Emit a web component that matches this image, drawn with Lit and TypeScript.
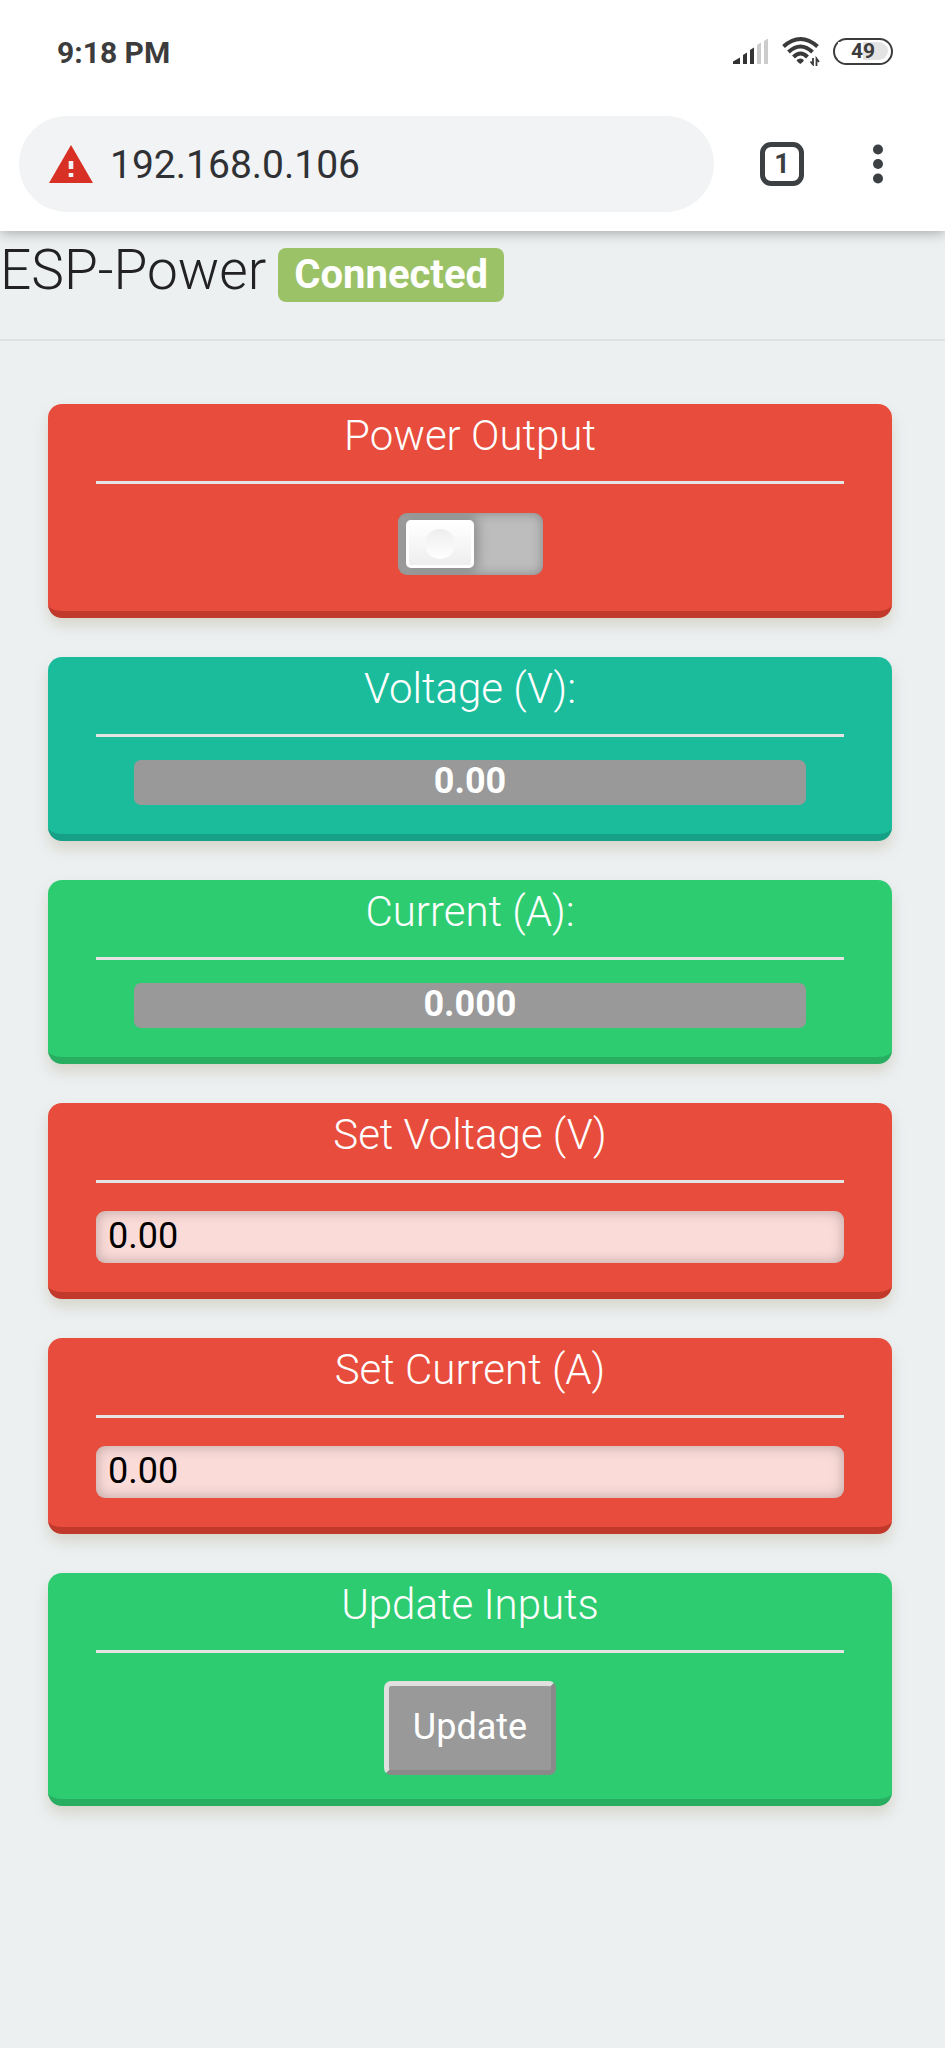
import { LitElement, html, css, svg, TemplateResult } from "lit";
import { customElement, state } from "lit/decorators.js";

@customElement("app-root")
export class AppRoot extends LitElement {
  static styles = css`
    :host {
      display: block;
      min-height: 100vh;
      background: #ecf0f1;
      color: #222;
      font-family: Roboto, sans-serif;
    }
    *,
    *::before,
    *::after {
      box-sizing: border-box;
    }
    h1,
    h2 {
      margin: 0;
      font-weight: 300;
    }
    .phone-chrome {
      background: #fff;
      color: #3c4043;
      box-shadow: 0 2px 12px rgba(0, 0, 0, 0.3);
    }
    .status {
      display: flex;
      align-items: center;
      justify-content: space-between;
      height: 104px;
      padding: 0 52px 0 57px;
    }
    .clock {
      font-size: 30px;
      font-weight: 700;
      color: #3c3c3c;
    }
    .indicators {
      display: flex;
      align-items: center;
      gap: 13px;
      padding-bottom: 2px;
    }
    .indicators svg,
    .toolbar svg {
      display: block;
    }
    .battery {
      display: flex;
      align-items: center;
      justify-content: center;
      width: 60px;
      height: 27px;
      border: 2px solid #3c3c3c;
      border-radius: 14px;
      padding: 3px;
    }
    .battery-level {
      flex: 1;
      border-radius: 0 10px 10px 0;
      background: linear-gradient(90deg, #fff 50%, #e3e3e3 50%);
      color: #3c3c3c;
      font-size: 21px;
      line-height: 18px;
      font-weight: 700;
      text-align: center;
    }
    .toolbar {
      display: flex;
      align-items: center;
      padding: 12px 19px 19px;
    }
    .address {
      display: flex;
      align-items: center;
      flex: 1;
      gap: 17px;
      height: 96px;
      padding-left: 30px;
      border-radius: 48px;
      background: #f1f3f4;
    }
    .url {
      flex: 1;
      min-width: 0;
      padding: 2px 0 0;
      border: 0;
      outline: 0;
      background: none;
      color: #303134;
      font: 400 39px/46px Roboto, sans-serif;
    }
    .tabs,
    .menu {
      display: flex;
      align-items: center;
      justify-content: center;
      padding: 0;
      border: 0;
      background: none;
      color: #3c4043;
    }
    .tabs {
      width: 44px;
      height: 44px;
      margin: 0 64px 0 46px;
      border: 5px solid #3c4043;
      border-radius: 11px;
      font: 700 27px/30px Roboto, sans-serif;
    }
    .menu {
      width: 20px;
      margin-right: 38px;
    }
    .title-bar {
      display: flex;
      align-items: flex-start;
      gap: 12px;
      height: 110px;
      padding-top: 4px;
      border-bottom: 2px solid #dfe2e3;
    }
    .title {
      font-size: 55px;
      line-height: 70px;
    }
    .badge {
      margin-top: 13px;
      padding: 0 16px;
      border-radius: 8px;
      background: #9cc268;
      color: #fff;
      font-size: 40px;
      line-height: 54px;
      font-weight: 700;
    }
    .cards {
      display: grid;
      gap: 39px;
      padding: 63px 53px 60px 48px;
    }
    .card {
      display: flex;
      flex-direction: column;
      align-items: center;
      padding: 0 48px;
      border-bottom: 7px solid;
      border-radius: 14px;
      color: #fff;
      box-shadow: 0 8px 14px rgba(160, 140, 100, 0.26);
    }
    .red {
      background: #e74c3c;
      border-color: #c0392b;
    }
    .teal {
      background: #1abc9c;
      border-color: #16a085;
    }
    .green {
      background: #2ecc71;
      border-color: #27ae60;
    }
    .heading {
      align-self: stretch;
      padding-bottom: 13px;
      border-bottom: 3px solid #e4e4e4;
      font-size: 42px;
      line-height: 64px;
      text-align: center;
    }
    .switch {
      appearance: none;
      display: block;
      position: relative;
      width: 145px;
      height: 62px;
      margin: 29px 0 36px;
      padding: 7px 8px;
      border-radius: 9px;
      overflow: hidden;
      background: #bdbdbd;
      box-shadow: inset 0 0 12px rgba(0, 0, 0, 0.3);
    }
    .switch::before {
      content: "";
      display: block;
      width: 68px;
      height: 48px;
      border: 3px solid #fff;
      border-radius: 5px;
      background: linear-gradient(#fff, #eee);
      box-shadow: 0 0 12px 4px rgba(0, 0, 0, 0.25);
    }
    .switch::after {
      content: "";
      position: absolute;
      top: 16px;
      left: 27px;
      width: 30px;
      height: 30px;
      border-radius: 50%;
      background: linear-gradient(#eee, #fff);
    }
    .switch:checked::before {
      margin-left: 61px;
    }
    .switch:checked::after {
      left: 88px;
    }
    .value {
      display: block;
      align-self: stretch;
      margin: 23px 38px 29px;
      border-radius: 7px;
      background: #999;
      font-size: 36px;
      line-height: 43px;
      height: 45px;
      padding-bottom: 2px;
      font-weight: 700;
      text-align: center;
    }
    .field {
      align-self: stretch;
      height: 52px;
      margin: 28px 0 29px;
      padding: 0 12px 2px;
      border: 0;
      border-radius: 9px;
      outline: 0;
      background: rgba(255, 255, 255, 0.8);
      box-shadow: inset 0 0 14px rgba(0, 0, 0, 0.26);
      color: #000;
      font: 400 36px/50px Roboto, sans-serif;
    }
    .update {
      width: 172px;
      height: 94px;
      margin: 28px 0 24px;
      padding: 0 0 3px;
      border: 5px solid;
      border-color: #e0e0e0 #8a8a8a #8a8a8a #e0e0e0;
      border-radius: 7px;
      background: #999;
      color: #fff;
      font: 400 36px/42px Roboto, sans-serif;
    }
  `;

  @state() private on = false;
  @state() private setVoltage = "0.00";
  @state() private setCurrent = "0.00";
  @state() private voltage = "0.00";
  @state() private current = "0.000";

  private card(tone: string, heading: unknown, body: unknown): TemplateResult {
    return html`<section class="card ${tone}">
      <h2 class="heading">${heading}</h2>
      ${body}
    </section>`;
  }

  private signal() {
    const bars = [
      "M0 26V23.5L7 19.5V26Z",
      "M10 26V17L14 14.5V26Z",
      "M17 26V12L21 9.5V26Z",
      "M24 26V7L28 4.5V26Z",
      "M31 26V3L35 0.5V26Z",
    ];
    return html`<svg width="36" height="26" viewBox="0 0 36 26" aria-hidden="true">
      ${bars.map((d, i) => svg`<path d=${d} fill=${i < 3 ? "#333" : "#ccc"} />`)}
    </svg>`;
  }

  private wifi() {
    return html`<svg width="38" height="30" viewBox="0 0 38 30" aria-hidden="true">
      <g fill="none" stroke="#3a3a3a" stroke-width="4">
        <path d="M1.5 10.5Q18.5 -4.5 35.5 10.5" />
        <path d="M6.5 16Q18.5 5 30.5 16" />
        <path d="M11.5 21Q18.5 14 25.5 21" />
      </g>
      <path d="M14.5 24Q18.5 21 22 24Q21.5 26 18.3 28Q15 26 14.5 24Z" fill="#3a3a3a" />
      <path d="M31 22V28.5L28.5 25.5M34.5 30V22.5L37 26" fill="none" stroke="#3a3a3a" stroke-width="1.8" />
    </svg>`;
  }

  render() {
    return html`
      <header class="phone-chrome">
        <div class="status">
          <span class="clock">9:18 PM</span>
          <div class="indicators">
            ${this.signal()} ${this.wifi()}
            <div class="battery"><span class="battery-level">49</span></div>
          </div>
        </div>
        <div class="toolbar">
          <div class="address">
            <svg width="44" height="38" viewBox="0 0 44 38" aria-hidden="true">
              <path d="M22 0L44 38H0Z" fill="#d93025" />
              <path d="M19.7 16H24.3V24H19.7ZM19.7 28H24.3V32H19.7Z" fill="#f1f3f4" />
            </svg>
            <input class="url" type="text" aria-label="Address" .value=${"192.168.0.106"} />
          </div>
          <button class="tabs" aria-label="Open tabs">1</button>
          <button class="menu" aria-label="Menu">
            <svg width="10" height="40" viewBox="0 0 10 40" fill="#3c4043" aria-hidden="true">
              <circle cx="5" cy="5.5" r="5" />
              <circle cx="5" cy="20" r="5" />
              <circle cx="5" cy="34.5" r="5" />
            </svg>
          </button>
        </div>
      </header>
      <div class="title-bar">
        <h1 class="title">ESP-Power</h1>
        <span class="badge">Connected</span>
      </div>
      <main class="cards">
        ${this.card(
          "red",
          html`<label for="power">Power Output</label>`,
          html`<input
            id="power"
            class="switch"
            type="checkbox"
            .checked=${this.on}
            @change=${(e: Event) => (this.on = (e.target as HTMLInputElement).checked)}
          />`
        )}
        ${this.card("teal", "Voltage (V):", html`<span class="value">${this.voltage}</span>`)}
        ${this.card("green", "Current (A):", html`<span class="value">${this.current}</span>`)}
        ${this.card(
          "red",
          html`<label for="set-voltage">Set Voltage (V)</label>`,
          html`<input
            id="set-voltage"
            class="field"
            type="text"
            inputmode="decimal"
            .value=${this.setVoltage}
            @input=${(e: Event) => (this.setVoltage = (e.target as HTMLInputElement).value)}
          />`
        )}
        ${this.card(
          "red",
          html`<label for="set-current">Set Current (A)</label>`,
          html`<input
            id="set-current"
            class="field"
            type="text"
            inputmode="decimal"
            .value=${this.setCurrent}
            @input=${(e: Event) => (this.setCurrent = (e.target as HTMLInputElement).value)}
          />`
        )}
        ${this.card("green", "Update Inputs", html`<button class="update">Update</button>`)}
      </main>
    `;
  }
}
